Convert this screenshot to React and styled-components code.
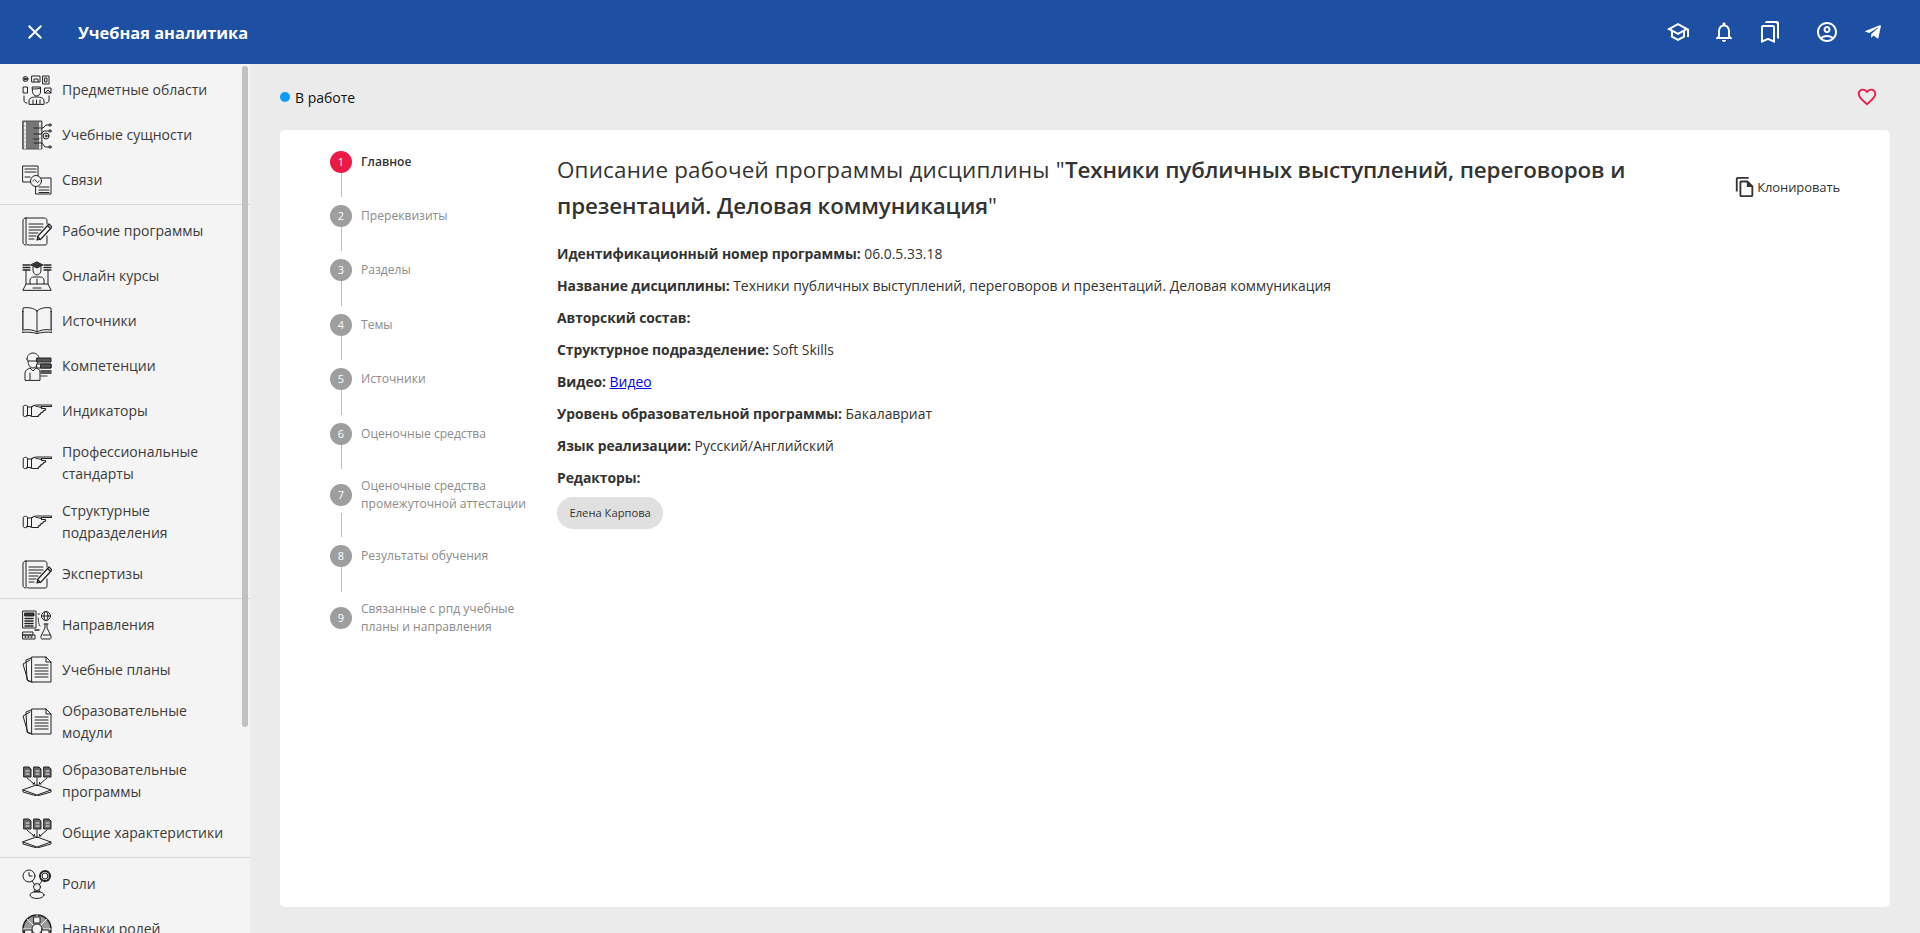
import styled, { createGlobalStyle } from "styled-components";
import {
    MdClose,
    MdOutlineSchool,
    MdOutlineNotifications,
    MdOutlineBookmarks,
    MdOutlineAccountCircle,
    MdFavoriteBorder,
    MdOutlineFileCopy,
} from "react-icons/md";
import { FaTelegramPlane } from "react-icons/fa";

const GlobalStyle = createGlobalStyle`
    html, body {
        margin: 0;
        padding: 0;
        height: 100%;
        overflow: hidden;
    }
    body {
        font-family: "Open Sans", "Liberation Sans", sans-serif;
        color: #333;
    }
    * {
        box-sizing: border-box;
    }
`;

const Page = styled.div`
    display: flex;
    flex-direction: column;
    height: 933px;
    background: #ebebeb;
`;

const Header = styled.header`
    display: flex;
    align-items: center;
    flex: 0 0 64px;
    background: #1d50a2;
    color: #fff;
    padding: 0 35px 0 23px;
`;

const CloseButton = styled.div`
    display: flex;
    font-size: 24px;
    width: 24px;
    margin-right: 31px;
`;

const AppTitle = styled.div`
    flex: 1;
    font-size: 16.4px;
    font-weight: 700;
`;

const HeaderIcons = styled.div`
    display: flex;
    align-items: center;
    gap: ${({ $gap }) => $gap}px;
    margin-left: ${({ $offset }) => $offset}px;
`;

const HeaderIcon = styled.div`
    display: flex;
    align-items: center;
    justify-content: center;
    width: 24px;
    height: 24px;
    font-size: ${({ $size }) => $size || 24}px;
`;

const Body = styled.div`
    display: flex;
    flex: 1;
    min-height: 0;
`;

const Sidebar = styled.nav`
    position: relative;
    flex: 0 0 250px;
    background: #f4f4f4;
    overflow: hidden;
`;

const ScrollThumb = styled.div`
    position: absolute;
    top: 2px;
    left: 242px;
    width: 6px;
    height: 661px;
    border-radius: 3px;
    background: #c1c1c1;
`;

const NavSection = styled.div`
    padding: 3px 0 2px;
    border-bottom: 1px solid #d6d6d6;

    &:last-of-type {
        border-bottom: none;
    }
`;

const NavItem = styled.div`
    display: flex;
    align-items: center;
    gap: 10px;
    min-height: ${({ $tall }) => ($tall ? 59 : 45)}px;
    padding-left: 22px;
    padding-right: 12px;
    font-size: 14px;
    line-height: 22px;
    color: #3b3b3b;
`;

const NavGlyph = styled.svg`
    flex: 0 0 30px;
    width: 30px;
    height: 30px;
    fill: none;
    stroke: #222;
    stroke-width: 1;
    stroke-linejoin: round;
    stroke-linecap: round;
`;

const Main = styled.main`
    flex: 1;
    display: flex;
    flex-direction: column;
    padding: 0 30px 26px;
    min-width: 0;
`;

const StatusRow = styled.div`
    flex: 0 0 66px;
    display: flex;
    align-items: center;
    justify-content: space-between;
`;

const Status = styled.div`
    display: flex;
    align-items: center;
    gap: 5px;
    font-size: 14px;
    color: #111;
`;

const StatusDot = styled.span`
    width: 10px;
    height: 10px;
    border-radius: 50%;
    background: #0a9bff;
`;

const Favorite = styled.div`
    display: flex;
    font-size: 22px;
    color: #ec1946;
    margin-right: 12px;
`;

const Card = styled.section`
    flex: 1;
    display: flex;
    background: #fff;
    border-radius: 5px;
    padding: 12.600px 50px 0 50px;
`;

const Stepper = styled.ol`
    flex: 0 0 227px;
    list-style: none;
    margin: 0;
    padding: 0;
`;

const Step = styled.li`
    display: flex;
    align-items: center;
    gap: 9px;
    padding-top: 8px;
    font-size: 12.1px;
    line-height: 18px;
    font-weight: ${({ $active }) => ($active ? 600 : 400)};
    color: ${({ $active }) => ($active ? "#333" : "#8c8c8c")};
`;

const StepNumber = styled.span`
    flex: 0 0 22px;
    height: 22px;
    display: flex;
    align-items: center;
    justify-content: center;
    border-radius: 50%;
    font-size: 11px;
    font-weight: 400;
    color: #fff;
    background: ${({ $active }) => ($active ? "#ec1946" : "#9e9e9e")};
`;

const StepLine = styled.div`
    width: 1px;
    height: 24.400px;
    margin-left: 11px;
    background: #bdbdbd;
`;

const Content = styled.div`
    flex: 1;
    min-width: 0;
`;

const TitleRow = styled.div`
    display: flex;
    align-items: flex-start;
    justify-content: space-between;
    margin-top: 9.400px;
    margin-bottom: 20px;
`;

const Title = styled.h1`
    margin: 0;
    width: 1100px;
    font-size: 22.4px;
    line-height: 36px;
    font-weight: 400;
    letter-spacing: 0.19px;
    color: #333;

    b {
        font-weight: 600;
        letter-spacing: -0.12px;
    }
`;

const CloneButton = styled.div`
    display: flex;
    align-items: center;
    gap: 1px;
    margin-top: 24px;
    font-size: 13px;
    letter-spacing: -0.1px;
    color: #333;

    svg {
        font-size: 22px;
    }
`;

const InfoRow = styled.div`
    font-size: 13.9px;
    line-height: 20px;
    margin-bottom: 12px;
    color: #333;

    &:last-of-type {
        margin-bottom: 9px;
    }

    b {
        font-weight: 700;
        letter-spacing: -0.06px;
    }

    a {
        color: #0000ee;
        text-decoration: underline;
    }
`;

const Chip = styled.span`
    display: inline-flex;
    align-items: center;
    height: 32px;
    padding: 0 12.500px;
    border-radius: 16px;
    background: #e0e0e0;
    font-size: 11.2px;
    color: #333;
`;

/* иконки меню нарисованы вручную, viewBox 30x30 */
const People = () => (
    <>
        <circle cx="3.500" cy="4" r="2.500" />
        <path d="M3 3l2 1-2 1z" fill="#222" />
        <rect x="10" y="1" width="8" height="6" />
        <path d="M12 7V4h4v3" />
        <rect x="21" y="1" width="6" height="8" />
        <rect x="23" y="3" width="2" height="4" />
        <rect x="1.500" y="12" width="4" height="6" />
        <path d="M10.500 12h8v5c0 2-2 4-4 4s-4-2-4-4z" />
        <path d="M10.500 14c3 0 6 0 8-1" />
        <rect x="23" y="13" width="6" height="5" />
        <path d="M23 18l3-3 3 3" />
        <path d="M7 29v-3c0-3 3-4 7.500-4s7.500 1 7.500 4v3zM11 25v4M14.500 25v4M18 25v4" />
        <path d="M2 21v4c0 2 1 3 3 3M27 21v4c0 2-1 3-3 3" />
    </>
);

const Entities = () => (
    <>
        <rect x="1" y="1" width="19" height="28" fill="#777" stroke="#555" />
        <path d="M3 3v25M18 3v25" stroke="#eee" strokeDasharray="2 2" strokeWidth="2" />
        <path d="M12 8h9l3-3h3M12 14h7l3-3h5M12 19h5M12 23h8l3 4h4" />
        <circle cx="28" cy="5" r="1.200" />
        <circle cx="28" cy="11" r="1.200" />
        <circle cx="28" cy="27" r="1.200" />
        <circle cx="24" cy="16" r="3" />
        <circle cx="24" cy="16" r="1" />
    </>
);

const Links = () => (
    <>
        <rect x="1" y="1" width="15" height="16" fill="#f4f4f4" />
        <path d="M3 4h11M3 7h11" strokeWidth="1.200" />
        <path d="M3 12h5" />
        <rect x="14" y="13" width="15" height="16" fill="#f4f4f4" />
        <path d="M17 22h10M17 25h10M17 27.500h10" />
        <circle cx="14" cy="16" r="5.500" fill="#f4f4f4" />
        <path d="M11 16c1-2 2-2 3 0s2 2 3 0" />
    </>
);

const Program = () => (
    <>
        <path d="M4 2h18c2 0 3 1 3 3v3M4 2C2 2 1 3 1 5v21c0 2 1 3 3 3M4 2v24c0 2 1 3 3 3h16c2 0 2-1 2-3v-6" />
        <path d="M7 8h14M7 11h14M7 14h12M7 17h9M7 20h7M7 23h5" strokeWidth="1.100" />
        <path d="M15 24l1-4 11-12 3 3-11 12zM15.500 20.500l3 3M25.500 9.500l3 3" strokeWidth="1.200" fill="#f4f4f4" />
    </>
);

const Course = () => (
    <>
        <path d="M1 4h7M1 6.500h7M1 9h7M22 4h7M22 6.500h7M22 9h7" strokeWidth="1.300" strokeDasharray="1.500 .8" />
        <path d="M15 1l6 3-6 3-6-3z" fill="#333" />
        <path d="M11 6v3c0 3 2 5 4 5s4-2 4-5V6" />
        <path d="M4 9v14M26 9v14" />
        <path d="M8 23v-4c0-2 2-3 4-3h6c2 0 4 1 4 3v4M15 18v5" />
        <path d="M1 29l3-6h22l3 6zM11 27h8" />
    </>
);

const Book = () => (
    <>
        <path d="M15 5C12 2 6 1 1 2v22c5-1 11 0 14 2 3-2 9-3 14-2V2c-5-1-11 0-14 3zM15 5v21" />
        <path d="M1 6H0v21c5-1 11 0 15 1 4-1 10-2 15-1V6h-1" transform="translate(0 -.5)" />
    </>
);

const Person = () => (
    <>
        <path d="M5 8c0-4 3-6 6-6s6 2 6 6c0 1-1 2-1 2H6S5 9 5 8z" />
        <path d="M6 10c0 4 2 7 5 7s5-3 5-7" />
        <path d="M3 29v-7c0-3 3-4 5-5l3 3 3-3c2 1 4 1 4 4v8zM8 22v7" />
        <rect x="15" y="7" width="14" height="4" fill="#555" stroke="#222" />
        <rect x="15" y="13" width="14" height="4" fill="#f4f4f4" />
        <rect x="19" y="13" width="10" height="4" fill="#555" stroke="#222" />
        <path d="M19 20h10M19 22h10" strokeWidth="1.500" />
        <path d="M19 25h6" strokeDasharray="1.500 1" />
    </>
);

const Hand = () => (
    <>
        <path d="M1.500 10c1-1 3-1 4 0v10c-1 1-3 1-4 0z" />
        <path d="M5.500 11h4c1-1 3-2 5-2h14.500c1 0 1 1.500 0 1.500H19l1 2h3c1 0 1 2-1 2l-1 1c0 1-2 1-2 1 0 2-1 2-2 2 0 2-2 2-2 2h-4c-2 0-3-1-3-1h-3.500" strokeWidth="1.100" />
        <path d="M9.500 11v8.500M14 10.500c2 0 4 0 5.500 2" />
    </>
);

const Direction = () => (
    <>
        <rect x="1" y="1" width="13" height="17" />
        <rect x="3" y="3" width="9" height="3" fill="#333" />
        <path d="M3 8.500h9M3 11h9M3 13.500h9M3 16h9" strokeWidth="1.500" strokeDasharray="2 1" />
        <circle cx="24" cy="6" r="4.500" />
        <ellipse cx="24" cy="6" rx="2" ry="4.500" />
        <path d="M19.500 6h9" />
        <path d="M16 4h2M16 8c1 3 0 5 2 8" strokeDasharray="1.500 1" />
        <path d="M22 14h4M23 14v4l-4 8c0 2 0 3 1 3h8c1 0 1-1 1-3l-4-8v-4" />
        <path d="M21 25h7" />
        <path d="M1 22h10v3H1zM1 29h12v-4H1z" />
        <path d="M3 27h1M6 27h1M9 27h1M13 20h4" strokeWidth="1.300" />
    </>
);

const Plans = () => (
    <>
        <path d="M8 5L1 9l5 17 4 1" />
        <path d="M9 3L4 5l1 20 5 2" />
        <path d="M10 2h14l5 5v20H10z" fill="#f4f4f4" />
        <path d="M24 2v5h5" />
        <path d="M13 10h13M13 13h13M13 16h13M13 19h13M13 22h13" strokeWidth="1.200" />
    </>
);

const ProgramBox = () => (
    <>
        <path d="M2 1h5l2 2v8H2zM12 1h5l2 2v8h-7zM22 1h5l2 2v8h-7z" fill="#666" stroke="#222" />
        <path d="M4 5h3M4 8h3M14 5h3M14 8h3M24 5h3M24 8h3" stroke="#eee" />
        <path d="M5 12l7 6M15 12v7M25 12l-7 6" />
        <path d="M11 18h1.500v-1.500M14 19l1 1 1-1M19 18h-1.500v-1.500" />
        <path d="M15 19L29 24 15 29 1 24z" />
        <path d="M1 24v2l14 4 14-4v-2" />
    </>
);

const Role = () => (
    <>
        <circle cx="7" cy="7" r="6" />
        <path d="M7 3.500V7h3" />
        <circle cx="23" cy="7" r="3" />
        <circle cx="23" cy="7" r="5" strokeWidth="2" strokeDasharray="2 1.500" />
        <path d="M10 12l3 4M20 12l-3 4" />
        <circle cx="15" cy="18" r="3.500" />
        <path d="M13 21l-1 2h6l-1-2" />
        <ellipse cx="15" cy="26" rx="7" ry="3.500" />
    </>
);

const Skills = () => (
    <>
        <circle cx="15" cy="15" r="14" strokeWidth="1.500" fill="#999" />
        <path d="M15 1v9M5 5l6 6M25 5l-6 6M1 15h9M29 15h-9" stroke="#f4f4f4" />
        <circle cx="15" cy="15" r="5" fill="#f4f4f4" />
        <rect x="3" y="16" width="7" height="7" fill="#f4f4f4" />
        <rect x="20" y="16" width="7" height="7" fill="#f4f4f4" />
        <rect x="12" y="3" width="6" height="6" fill="#f4f4f4" />
        <circle cx="15" cy="25" r="3" fill="#f4f4f4" />
    </>
);

const icons = { People, Entities, Links, Program, Course, Book, Person, Hand, Direction, Plans, ProgramBox, Role, Skills };

const navSections = [
    [
        { label: "Предметные области", icon: "People" },
        { label: "Учебные сущности", icon: "Entities" },
        { label: "Связи", icon: "Links" },
    ],
    [
        { label: "Рабочие программы", icon: "Program" },
        { label: "Онлайн курсы", icon: "Course" },
        { label: "Источники", icon: "Book" },
        { label: "Компетенции", icon: "Person" },
        { label: "Индикаторы", icon: "Hand" },
        { label: "Профессиональные стандарты", icon: "Hand", tall: true },
        { label: "Структурные подразделения", icon: "Hand", tall: true },
        { label: "Экспертизы", icon: "Program" },
    ],
    [
        { label: "Направления", icon: "Direction" },
        { label: "Учебные планы", icon: "Plans" },
        { label: "Образовательные модули", icon: "Plans", tall: true },
        { label: "Образовательные программы", icon: "ProgramBox", tall: true },
        { label: "Общие характеристики", icon: "ProgramBox" },
    ],
    [
        { label: "Роли", icon: "Role" },
        { label: "Навыки ролей", icon: "Skills" },
    ],
];

const steps = [
    "Главное",
    "Пререквизиты",
    "Разделы",
    "Темы",
    "Источники",
    "Оценочные средства",
    <>Оценочные средства<br />промежуточной аттестации</>,
    "Результаты обучения",
    <>Связанные с рпд учебные<br />планы и направления</>,
];

export default function App() {
    return (
        <Page>
            <GlobalStyle />
            <Header>
                <CloseButton><MdClose /></CloseButton>
                <AppTitle>Учебная аналитика</AppTitle>
                <HeaderIcons $gap={22}>
                    <HeaderIcon><MdOutlineSchool /></HeaderIcon>
                    <HeaderIcon><MdOutlineNotifications /></HeaderIcon>
                    <HeaderIcon><MdOutlineBookmarks /></HeaderIcon>
                </HeaderIcons>
                <HeaderIcons $gap={22} $offset={33}>
                    <HeaderIcon><MdOutlineAccountCircle /></HeaderIcon>
                    <HeaderIcon $size={18}><FaTelegramPlane /></HeaderIcon>
                </HeaderIcons>
            </Header>
            <Body>
                <Sidebar>
                    {navSections.map((section, i) => (
                        <NavSection key={i}>
                            {section.map((item) => {
                                const Icon = icons[item.icon];
                                return (
                                    <NavItem key={item.label} $tall={item.tall}>
                                        <NavGlyph viewBox="0 0 30 30"><Icon /></NavGlyph>
                                        <span>{item.label}</span>
                                    </NavItem>
                                );
                            })}
                        </NavSection>
                    ))}
                    <ScrollThumb />
                </Sidebar>
                <Main>
                    <StatusRow>
                        <Status><StatusDot />В работе</Status>
                        <Favorite><MdFavoriteBorder /></Favorite>
                    </StatusRow>
                    <Card>
                        <Stepper>
                            {steps.map((label, i) => (
                                <div key={i}>
                                    <Step $active={i === 0}>
                                        <StepNumber $active={i === 0}>{i + 1}</StepNumber>
                                        <span>{label}</span>
                                    </Step>
                                    {i < steps.length - 1 && <StepLine />}
                                </div>
                            ))}
                        </Stepper>
                        <Content>
                            <TitleRow>
                                <Title>
                                    Описание рабочей программы дисциплины "<b>Техники публичных выступлений, переговоров и презентаций. Деловая коммуникация</b>"
                                </Title>
                                <CloneButton><MdOutlineFileCopy />Клонировать</CloneButton>
                            </TitleRow>
                            <InfoRow><b>Идентификационный номер программы:</b> 06.0.5.33.18</InfoRow>
                            <InfoRow><b>Название дисциплины:</b> Техники публичных выступлений, переговоров и презентаций. Деловая коммуникация</InfoRow>
                            <InfoRow><b>Авторский состав:</b></InfoRow>
                            <InfoRow><b>Структурное подразделение:</b> Soft Skills</InfoRow>
                            <InfoRow><b>Видео:</b> <a href="#video">Видео</a></InfoRow>
                            <InfoRow><b>Уровень образовательной программы:</b> Бакалавриат</InfoRow>
                            <InfoRow><b>Язык реализации:</b> Русский/Английский</InfoRow>
                            <InfoRow><b>Редакторы:</b></InfoRow>
                            <Chip>Елена Карпова</Chip>
                        </Content>
                    </Card>
                </Main>
            </Body>
        </Page>
    );
}
